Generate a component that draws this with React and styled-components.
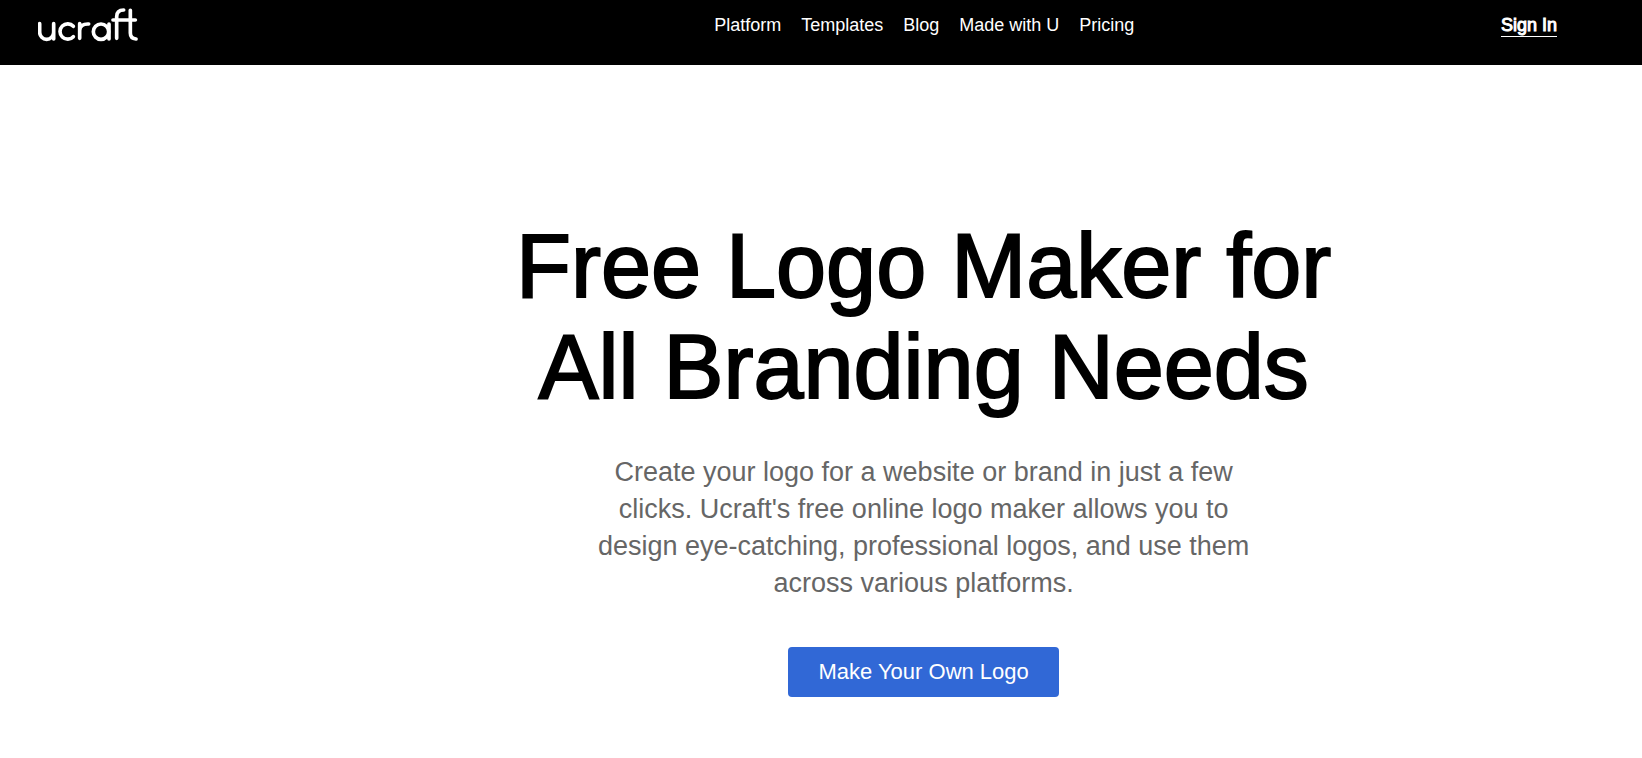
import React from "react";
import styled, { createGlobalStyle } from "styled-components";

const GlobalStyle = createGlobalStyle`
  body {
    margin: 0;
    background-color: #ffffff;
    font-family: "Liberation Sans", Arial, sans-serif;
  }
`;

const Header = styled.header`
  display: grid;
  grid-template-columns: 1.6fr auto 1fr;
  align-items: start;
  box-sizing: border-box;
  min-height: 65px;
  padding: 8px 85px 16px 38px;
  background-color: #000000;
`;

const LogoLink = styled.a`
  justify-self: start;
  line-height: 0;
`;

const Nav = styled.nav`
  display: flex;
  gap: 20px;
  padding-top: 6px;
`;

const NavLink = styled.a`
  color: #ffffff;
  font-size: 18px;
  line-height: 22px;
  text-decoration: none;
  white-space: nowrap;
`;

const SignIn = styled(NavLink)`
  justify-self: end;
  margin-top: 6px;
  border-bottom: 1px solid #ffffff;
  -webkit-text-stroke: 1px #ffffff;
`;

const Hero = styled.main`
  display: flex;
  flex-direction: column;
  align-items: center;
  padding: 151px 0 60px 12.5%;
  text-align: center;
`;

const Title = styled.h1`
  max-width: 860px;
  margin: 0;
  color: #000000;
  font-size: 90px;
  font-weight: 400;
  line-height: 101px;
  -webkit-text-stroke: 2px #000000;
`;

const Description = styled.p`
  max-width: 680px;
  margin: 36px 0 45px;
  color: #666666;
  font-size: 27px;
  line-height: 37px;
`;

const MakeButton = styled.button`
  height: 50px;
  padding: 0 30px;
  border: none;
  border-radius: 4px;
  background-color: #3168d6;
  color: #ffffff;
  font-family: inherit;
  font-size: 22px;
  cursor: pointer;
`;

const links = ["Platform", "Templates", "Blog", "Made with U", "Pricing"];

function Logo() {
  return (
    <svg
      width="100"
      height="34"
      viewBox="54 24 300 102"
      fill="none"
      stroke="#ffffff"
      strokeWidth="11"
      strokeLinecap="round"
      strokeLinejoin="round"
      aria-hidden="true"
    >
      <path d="M59 71V97a21 21 0 0 0 42 0V71M101 97V117" />
      <path d="M160 79a23 23 0 1 0 0 31" />
      <path d="M179 71V115M179 92c0-13 10-21 27-20" />
      <circle cx="243" cy="95" r="23" />
      <path d="M267 72V117" />
      <path d="M290 115V50c0-13 8-20 21-20" />
      <path d="M279 60H346" />
      <path d="M331 31V99c0 11 7 17 17 18" />
    </svg>
  );
}

export default function App() {
  return (
    <>
      <GlobalStyle />
      <Header>
        <LogoLink href="#" aria-label="ucraft">
          <Logo />
        </LogoLink>
        <Nav>
          {links.map((link) => (
            <NavLink href="#" key={link}>
              {link}
            </NavLink>
          ))}
        </Nav>
        <SignIn href="#">Sign In</SignIn>
      </Header>
      <Hero>
        <Title>
          Free Logo Maker for
          <br />
          All Branding Needs
        </Title>
        <Description>
          Create your logo for a website or brand in just a few clicks.
          Ucraft's free online logo maker allows you to design eye-catching,
          professional logos, and use them across various platforms.
        </Description>
        <MakeButton type="button">Make Your Own Logo</MakeButton>
      </Hero>
    </>
  );
}
